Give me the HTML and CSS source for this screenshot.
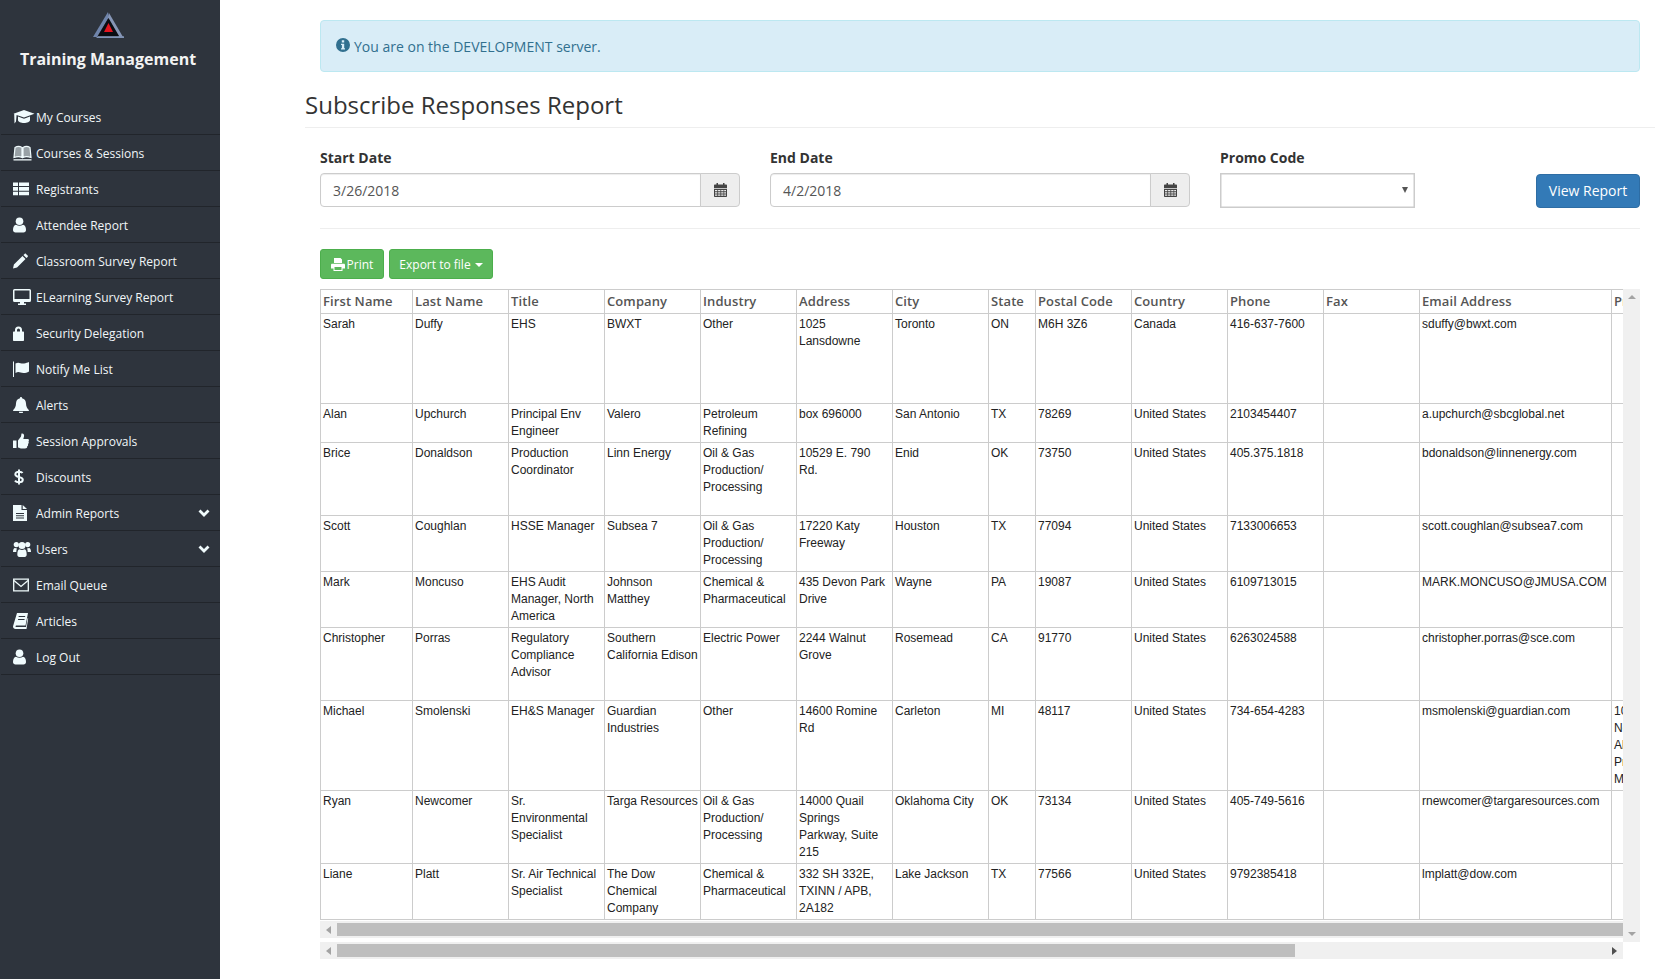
FILE: index.html
```html
<!DOCTYPE html>
<html lang="en">
<head>
<meta charset="utf-8">
<title>Subscribe Responses Report</title>
<link rel="stylesheet" href="styles.css">
</head>
<body>
<svg class="sprite" aria-hidden="true">
  <symbol id="i-cap" viewBox="0 0 22 16"><path d="M11 1 21.500 4.800 11 8.600 3.600 6 3 12.500 1.500 14.500 1.200 5 .5 4.800z"/><path d="M5 7.500 11 9.800 17 7.500V11c0 1.800-3 3-6 3s-6-1.200-6-3z"/></symbol>
  <symbol id="i-book" viewBox="0 0 22 16"><path d="M2 2.500C4 1.300 7 1.300 9 2.500v10C7 11.500 4 11.500 1 12.500zM17 2.500C15 1.300 12 1.300 10 2.500v10c2-1 5-1 8 0z" fill="currentColor" fill-opacity=".55" stroke="currentColor" stroke-width="1.200"/><path d="M.5 14.200h18v1.300H.5z"/></symbol>
  <symbol id="i-list" viewBox="0 0 22 16"><path d="M0 1.500h5v3.600H0zM6 1.500h10v3.600H6zM0 6.100h5v3.600H0zM6 6.100h10v3.600H6zM0 10.700h5v3.600H0zM6 10.700h10v3.600H6z"/></symbol>
  <symbol id="i-user" viewBox="0 0 22 16"><circle cx="6.500" cy="4.200" r="3.800"/><path d="M0 13c0-3 1-5 3-5.300 2 1.500 5 1.500 7 0 2 .3 3 2.300 3 5.300 0 1.500-1 2.500-2.500 2.500h-8C1 15.500 0 14.500 0 13z"/></symbol>
  <symbol id="i-pencil" viewBox="0 0 22 16"><path d="M0 15.500 .9 11.500 9.500 3 12.500 6 4 14.600zM10.400 2.100l1.200-1.200c.5-.4 1-.4 1.400 0l1.600 1.600c.4.500.4 1 0 1.400l-1.200 1.200z"/></symbol>
  <symbol id="i-desktop" viewBox="0 0 22 16"><path fill-rule="evenodd" d="M1.500 0h15A1.500 1.500 0 0 1 18 1.500v10a1.500 1.500 0 0 1-1.500 1.500H11v1.500h2V16H5v-1.500h2V13H1.500A1.500 1.500 0 0 1 0 11.500v-10A1.500 1.500 0 0 1 1.500 0zm0 1.500v8.500h15V1.500z"/></symbol>
  <symbol id="i-lock" viewBox="0 0 22 16"><path fill-rule="evenodd" d="M2 6.500V5a3.500 3.500 0 0 1 7 0v1.500h1c.6 0 1 .4 1 1V15c0 .6-.4 1-1 1H1c-.6 0-1-.4-1-1V7.500c0-.6.4-1 1-1zm2 0h3V5a1.500 1.500 0 0 0-3 0z"/></symbol>
  <symbol id="i-flag" viewBox="0 0 22 16"><path d="M0 .5h1V16H0zM2.500 2.500C6 .5 7.500 3 11 2.500c2-.3 3.500-1 5-1.500v9.500c-2 1-3.500 1.500-5.500 1.500-3.500 0-4.500-2-8 0z"/></symbol>
  <symbol id="i-bell" viewBox="0 0 22 16"><path d="M8 0c.6 0 1 .4 1 1v.3c2.700.5 4 2.700 4 5.200 0 3 1.200 4.800 2.800 6.500.3.500 0 1-.5 1H.7c-.5 0-.8-.5-.5-1C1.800 11.300 3 9.500 3 6.500c0-2.500 1.300-4.700 4-5.200V1c0-.6.400-1 1-1zM6 14.800h4a2 2 0 0 1-4 0z"/></symbol>
  <symbol id="i-thumb" viewBox="0 0 22 16"><path d="M0 7.500h3.500V15H0zM5 7.500 8 3.500 8.500 .5c2-.5 3 1 2.500 3L10.300 6h4.200c2 0 1.500 2 1 2.500.5 1 .3 2-.5 2.500.3 1 0 2-.8 2.300.2 1.500-.7 2.200-2.200 2.200H9c-1.500 0-2.500-.5-4-1z"/></symbol>
  <symbol id="i-dollar" viewBox="0 0 22 16"><path d="M9.500 4C9 3 7.500 2.700 6 2.700 4 2.700 2.300 3.500 2.300 5.200 2.300 9 9.800 7 9.800 10.800c0 1.700-1.800 2.500-3.800 2.500-1.700 0-3.200-.5-4-1.700M6 .5v15" fill="none" stroke="currentColor" stroke-width="2"/></symbol>
  <symbol id="i-file" viewBox="0 0 22 16"><path fill-rule="evenodd" d="M0 0h8.500v5H14v11H0zM3 8v1h8V8zm0 2.200v1h8v-1zm0 2.200v1h8v-1z"/><path d="M9.700 0 14 4H9.700z"/></symbol>
  <symbol id="i-users" viewBox="0 0 22 16"><circle cx="3.300" cy="3.600" r="2.600"/><circle cx="14.700" cy="3.600" r="2.600"/><circle cx="9" cy="4.500" r="3.500"/><path d="M0 11c0-2 .6-4 2-4 .7 0 1.200.4 2 .6C3.500 8.500 3.300 9.800 3.300 11zM18 11c0-2-.6-4-2-4-.7 0-1.200.4-2 .6.500.9.700 2.200.7 3.400zM4.300 13.500c0-3 .7-5 2.200-5.200 1.500 1 3.500 1 5 0 1.500.2 2.200 2.200 2.200 5.200 0 1.300-.8 2.500-2 2.500h-5.400c-1.200 0-2-1.200-2-2.500z"/></symbol>
  <symbol id="i-mail" viewBox="0 0 22 16"><path d="M.7 2.200h14.600v11.600H.7z" fill="none" stroke="currentColor" stroke-width="1.300"/><path d="M1 3.500 8 9.500 15 3.500" fill="none" stroke="currentColor" stroke-width="1.300"/></symbol>
  <symbol id="i-article" viewBox="0 0 22 16"><path fill-rule="evenodd" d="M4 0h11l-2.500 12.500H3.500c-1 0-1.300 1.500-.3 1.500H13l1.600-9 .6.600L13.500 16H2.500C.8 16-.3 14.500.1 13zM5.800 3l-.3 1h6.500l.3-1zM5.200 6l-.3 1h6.500l.3-1z"/></symbol>
  <symbol id="i-chev" viewBox="0 0 12 9"><path d="M1.500 1.500 6 6 10.500 1.500" fill="none" stroke="currentColor" stroke-width="2.800"/></symbol>
  <symbol id="i-info" viewBox="0 0 14 14"><path fill-rule="evenodd" d="M7 0a7 7 0 1 1 0 14A7 7 0 0 1 7 0zM5.800 2.200v2.200h2.400V2.200zM5 5.700v1.400h.9v3.100H5v1.400h4v-1.400h-.8V5.700z"/></symbol>
  <symbol id="i-cal" viewBox="0 0 13 14"><path fill-rule="evenodd" d="M2.500 0h1.500v1.500h5V0h1.500v1.500H12c.6 0 1 .4 1 1V5H0V2.500c0-.6.4-1 1-1h1.500zM0 5.800h13V13c0 .6-.4 1-1 1H1c-.6 0-1-.4-1-1zM1 7v1.300h2.300V7zm3.100 0v1.300h2.300V7zm3.100 0v1.300h2.300V7zm3 0v1.300H12V7zM1 9.200v1.300h2.300V9.200zm3.100 0v1.300h2.300V9.200zm3.100 0v1.300h2.300V9.200zm3 0v1.300H12V9.200zM1 11.400v1.300h2.300v-1.300zm3.100 0v1.300h2.300v-1.300zm3.100 0v1.300h2.300v-1.300zm3 0v1.300H12v-1.300z"/></symbol>
  <symbol id="i-print" viewBox="0 0 14 13"><path fill-rule="evenodd" d="M3 0h6.500L11 1.500V5H3zM1.200 5.800h11.600c.7 0 1.200.5 1.200 1.200v3.500h-2.500V13h-9v-2.500H0V7c0-.7.5-1.200 1.200-1.200zM3.500 9v3h7V9z"/></symbol>
</svg>

<div class="app">
  <aside class="sidebar">
    <div class="brand">
      <svg class="logo" viewBox="0 0 31 26" aria-hidden="true">
        <path d="M15 0 0 25h4L16 5z" fill="#6f84ab"/>
        <path d="M16 1 30 25h-4L15 6z" fill="#8696b6"/>
        <path d="M15.500 6 26 24H5z" fill="#0b0d12"/>
        <path d="M15.500 11 20 20H11z" fill="#e3141f"/>
        <path d="M5 24.200h26V26H3z" fill="#8093b5"/>
      </svg>
      <div class="brand-name">Training Management</div>
    </div>
    <nav class="nav">
      <a class="nav-item"><svg class="nav-icon"><use href="#i-cap"/></svg>My Courses</a>
      <a class="nav-item"><svg class="nav-icon"><use href="#i-book"/></svg>Courses &amp; Sessions</a>
      <a class="nav-item"><svg class="nav-icon"><use href="#i-list"/></svg>Registrants</a>
      <a class="nav-item"><svg class="nav-icon"><use href="#i-user"/></svg>Attendee Report</a>
      <a class="nav-item"><svg class="nav-icon"><use href="#i-pencil"/></svg>Classroom Survey Report</a>
      <a class="nav-item"><svg class="nav-icon"><use href="#i-desktop"/></svg>ELearning Survey Report</a>
      <a class="nav-item"><svg class="nav-icon"><use href="#i-lock"/></svg>Security Delegation</a>
      <a class="nav-item"><svg class="nav-icon"><use href="#i-flag"/></svg>Notify Me List</a>
      <a class="nav-item"><svg class="nav-icon"><use href="#i-bell"/></svg>Alerts</a>
      <a class="nav-item"><svg class="nav-icon"><use href="#i-thumb"/></svg>Session Approvals</a>
      <a class="nav-item"><svg class="nav-icon"><use href="#i-dollar"/></svg>Discounts</a>
      <a class="nav-item"><svg class="nav-icon"><use href="#i-file"/></svg>Admin Reports<svg class="nav-chev"><use href="#i-chev"/></svg></a>
      <a class="nav-item"><svg class="nav-icon"><use href="#i-users"/></svg>Users<svg class="nav-chev"><use href="#i-chev"/></svg></a>
      <a class="nav-item"><svg class="nav-icon"><use href="#i-mail"/></svg>Email Queue</a>
      <a class="nav-item"><svg class="nav-icon"><use href="#i-article"/></svg>Articles</a>
      <a class="nav-item"><svg class="nav-icon"><use href="#i-user"/></svg>Log Out</a>
    </nav>
  </aside>

  <main class="main">
    <div class="inset">
      <div class="alert"><svg class="alert-icon"><use href="#i-info"/></svg>You are on the DEVELOPMENT server.</div>
    </div>
    <h1 class="page-title">Subscribe Responses Report</h1>
    <div class="inset">
      <form class="filters">
        <div class="field field-date">
          <label class="field-label">Start Date</label>
          <div class="input-group"><span class="input">3/26/2018</span><span class="addon"><svg class="cal"><use href="#i-cal"/></svg></span></div>
        </div>
        <div class="field field-date">
          <label class="field-label">End Date</label>
          <div class="input-group"><span class="input">4/2/2018</span><span class="addon"><svg class="cal"><use href="#i-cal"/></svg></span></div>
        </div>
        <div class="field field-promo">
          <label class="field-label">Promo Code</label>
          <div class="select"><span class="select-arrow"></span></div>
        </div>
        <button class="btn btn-primary" type="button">View Report</button>
      </form>
      <hr class="rule">
      <div class="toolbar">
        <button class="btn-sm" type="button"><svg class="print"><use href="#i-print"/></svg>Print</button>
        <button class="btn-sm btn-export" type="button">Export to file<span class="caret"></span></button>
      </div>

      <div class="report">
        <div class="report-left">
          <div class="viewport">
            <table class="grid">
              <colgroup>
                <col class="c92"><col class="c96"><col class="c96"><col class="c96"><col class="c96"><col class="c96"><col class="c96"><col class="c47"><col class="c96"><col class="c96"><col class="c96"><col class="c96"><col class="c192"><col class="c96">
              </colgroup>
              <thead>
                <tr><th>First Name</th><th>Last Name</th><th>Title</th><th>Company</th><th>Industry</th><th>Address</th><th>City</th><th>State</th><th>Postal Code</th><th>Country</th><th>Phone</th><th>Fax</th><th>Email Address</th><th>Pr</th></tr>
              </thead>
              <tbody>
                <tr class="h90"><td>Sarah</td><td>Duffy</td><td>EHS</td><td>BWXT</td><td>Other</td><td>1025 Lansdowne</td><td>Toronto</td><td>ON</td><td>M6H 3Z6</td><td>Canada</td><td>416-637-7600</td><td></td><td>sduffy@bwxt.com</td><td></td></tr>
                <tr class="h39"><td>Alan</td><td>Upchurch</td><td>Principal Env Engineer</td><td>Valero</td><td>Petroleum Refining</td><td>box 696000</td><td>San Antonio</td><td>TX</td><td>78269</td><td>United States</td><td>2103454407</td><td></td><td>a.upchurch@sbcglobal.net</td><td></td></tr>
                <tr class="h73"><td>Brice</td><td>Donaldson</td><td>Production Coordinator</td><td>Linn Energy</td><td>Oil &amp; Gas Production/ Processing</td><td>10529 E. 790 Rd.</td><td>Enid</td><td>OK</td><td>73750</td><td>United States</td><td>405.375.1818</td><td></td><td>bdonaldson@linnenergy.com</td><td></td></tr>
                <tr class="h56"><td>Scott</td><td>Coughlan</td><td>HSSE Manager</td><td>Subsea 7</td><td>Oil &amp; Gas Production/ Processing</td><td>17220 Katy Freeway</td><td>Houston</td><td>TX</td><td>77094</td><td>United States</td><td>7133006653</td><td></td><td>scott.coughlan@subsea7.com</td><td></td></tr>
                <tr class="h56"><td>Mark</td><td>Moncuso</td><td>EHS Audit Manager, North America</td><td>Johnson Matthey</td><td>Chemical &amp; Pharmaceutical</td><td>435 Devon Park Drive</td><td>Wayne</td><td>PA</td><td>19087</td><td>United States</td><td>6109713015</td><td></td><td>MARK.MONCUSO@JMUSA.COM</td><td></td></tr>
                <tr class="h73"><td>Christopher</td><td>Porras</td><td>Regulatory Compliance Advisor</td><td>Southern California Edison</td><td>Electric Power</td><td>2244 Walnut Grove</td><td>Rosemead</td><td>CA</td><td>91770</td><td>United States</td><td>6263024588</td><td></td><td>christopher.porras@sce.com</td><td></td></tr>
                <tr class="h90"><td>Michael</td><td>Smolenski</td><td>EH&amp;S Manager</td><td>Guardian Industries</td><td>Other</td><td>14600 Romine Rd</td><td>Carleton</td><td>MI</td><td>48117</td><td>United States</td><td>734-654-4283</td><td></td><td>msmolenski@guardian.com</td><td>10<br>Ne<br>Ab<br>Pr<br>Ma</td></tr>
                <tr class="h73"><td>Ryan</td><td>Newcomer</td><td>Sr. Environmental Specialist</td><td>Targa Resources</td><td>Oil &amp; Gas Production/ Processing</td><td>14000 Quail Springs Parkway, Suite 215</td><td>Oklahoma City</td><td>OK</td><td>73134</td><td>United States</td><td>405-749-5616</td><td></td><td>rnewcomer@targaresources.com</td><td></td></tr>
                <tr class="h56"><td>Liane</td><td>Platt</td><td>Sr. Air Technical Specialist</td><td>The Dow Chemical Company</td><td>Chemical &amp; Pharmaceutical</td><td>332 SH 332E, TXINN / APB, 2A182</td><td>Lake Jackson</td><td>TX</td><td>77566</td><td>United States</td><td>9792385418</td><td></td><td>lmplatt@dow.com</td><td></td></tr>
              </tbody>
            </table>
          </div>
          <div class="hbar hbar-inner"><span class="arrow-left"></span><span class="thumb thumb-full"></span></div>
        </div>
        <div class="vbar"><span class="arrow-up"></span><span class="arrow-down"></span></div>
        <div class="hbar hbar-outer"><span class="arrow-left"></span><span class="thumb thumb-long"></span><span class="arrow-right"></span></div>
      </div>
    </div>
  </main>
</div>
</body>
</html>
```

FILE: styles.css
```css
* { box-sizing: border-box; }
html, body { margin: 0; height: 100%; overflow: hidden; background: #fff; }
body { font-family: "Open Sans", "Liberation Sans", sans-serif; font-size: 14px; color: #333; }
.sprite { display: none; }
.app { display: flex; height: 979px; }

/* Sidebar */
.sidebar { width: 220px; flex: none; background: #2e343d; color: #f1f6f8; }
.brand { height: 99px; padding: 12px 4px 0 0; display: flex; flex-direction: column; align-items: center; }
.logo { width: 31px; height: 26px; display: block; }
.brand-name { margin-top: 9px; font-size: 16px; line-height: 24px; font-weight: 700; color: #f3f3f3; white-space: nowrap; }
.nav { margin-left: 1px; }
.nav-item { display: flex; align-items: center; height: 36px; padding: 1px 10px 0 12px; border-bottom: 1px solid #21252b; font-size: 12px; color: #f1f6f8; }
.nav-icon { width: 22px; height: 16px; margin-right: 1px; fill: #f0fbfd; color: #f0fbfd; flex: none; }
.nav-chev { width: 12px; height: 9px; margin-left: auto; fill: none; color: #f0fbfd; }

/* Main */
.main { width: 1350px; flex: none; margin-left: 85px; padding-top: 20px; }
.inset { padding: 0 15px; }
.alert { height: 52px; display: flex; align-items: center; padding: 0 15px; background: #d9edf7; border: 1px solid #bce8f1; border-radius: 4px; color: #31708f; }
.alert-icon { width: 14px; height: 14px; margin-right: 4px; margin-top: -2px; fill: #31708f; }
.page-title { margin: 16px 0 20px; padding-bottom: 6px; border-bottom: 1px solid #eee; font-size: 24px; line-height: 33px; font-weight: 400; color: #333; }

/* Filters */
.filters { display: flex; align-items: flex-end; gap: 30px; }
.field-date { width: 420px; }
.field-promo { width: 195px; }
.field-label { display: block; margin-bottom: 5px; font-size: 14px; line-height: 20px; font-weight: 700; }
.input-group { display: flex; height: 34px; margin-bottom: 1px; }
.input { flex: 1; padding: 1px 12px 0; line-height: 32px; border: 1px solid #ccc; border-radius: 4px 0 0 4px; color: #555; box-shadow: inset 0 1px 1px rgba(0,0,0,.075); }
.addon { width: 40px; display: flex; align-items: center; justify-content: center; margin-left: -1px; background: #eee; border: 1px solid #ccc; border-radius: 0 4px 4px 0; }
.cal { width: 13px; height: 14px; fill: #444; }
.select { height: 35px; position: relative; border: 1px solid #ccc; box-shadow: inset 0 0 0 .5px #ccc; }
.select-arrow { position: absolute; right: 6px; top: 13px; border: 3px solid transparent; border-top: 6px solid #555; border-bottom: 0; }
.btn { margin-left: auto; height: 34px; padding: 0 0 2px; font: 14px "Open Sans", sans-serif; border-radius: 4px; cursor: pointer; white-space: nowrap; }
.btn-primary { width: 104px; background: #337ab7; border: 1px solid #2e6da4; color: #fff; }
.rule { margin: 20px 0; border: 0; border-top: 1px solid #eee; }

/* Toolbar */
.toolbar { display: flex; gap: 5px; margin-bottom: 10px; }
.btn-sm { display: flex; align-items: center; justify-content: center; width: 64px; height: 30px; padding: 0; background: #5cb85c; border: 1px solid #4cae4c; border-radius: 3px; color: #fff; font: 12px "Open Sans", sans-serif; }
.btn-export { width: 104px; }
.print { width: 14px; height: 13px; margin-right: 2px; fill: #fff; }
.caret { margin-left: 4px; margin-top: 1px; border: 4px solid transparent; border-top-color: #fff; border-bottom: 0; }

/* Report */
.report { display: grid; grid-template-columns: 1303px 17px; grid-template-rows: 653px 17px; }
.viewport { height: 631px; overflow: hidden; }
.grid { table-layout: fixed; width: 1387px; border-collapse: collapse; font-family: "Liberation Sans", Arial, sans-serif; font-size: 12px; line-height: 17px; color: #222; }
.c92 { width: 92px; }
.c96 { width: 96px; }
.c47 { width: 47px; }
.c192 { width: 192px; }
.grid th { height: 24px; padding: 0 2px; border: 1px solid #ccc; text-align: left; font-family: "Open Sans", sans-serif; font-size: 13px; font-weight: 600; letter-spacing: .1px; color: #555; white-space: nowrap; overflow: hidden; }
.grid td { padding: 2px; border: 1px solid #ccc; vertical-align: top; }
.h39 td { height: 39px; }
.h56 td { height: 56px; }
.h73 td { height: 73px; }
.h90 td { height: 90px; }

/* Fake scrollbars */
.report-left { grid-column: 1; grid-row: 1; min-width: 0; }
.hbar { height: 17px; display: flex; align-items: center; background: #f0f0f0; }
.hbar-inner { margin-top: 1px; }
.hbar-outer { grid-column: 1; grid-row: 2; }
.thumb { height: 13px; background: #bebebe; }
.thumb-full { flex: 1; }
.thumb-long { width: 958px; }
.arrow-left { width: 17px; display: flex; justify-content: center; }
.arrow-left::before { content: ""; border: 4px solid transparent; border-right: 5px solid #a3a3a3; border-left: 0; }
.arrow-right { margin-left: auto; width: 17px; display: flex; justify-content: center; }
.arrow-right::before { content: ""; border: 4px solid transparent; border-left: 5px solid #505050; border-right: 0; }
.vbar { grid-column: 2; grid-row: 1; background: #f0f0f0; display: flex; flex-direction: column; justify-content: space-between; align-items: center; padding: 6px 0; }
.arrow-up { border: 4px solid transparent; border-bottom: 4px solid #a3a3a3; border-top: 0; }
.arrow-down { border: 4px solid transparent; border-top: 4px solid #a3a3a3; border-bottom: 0; }
```
